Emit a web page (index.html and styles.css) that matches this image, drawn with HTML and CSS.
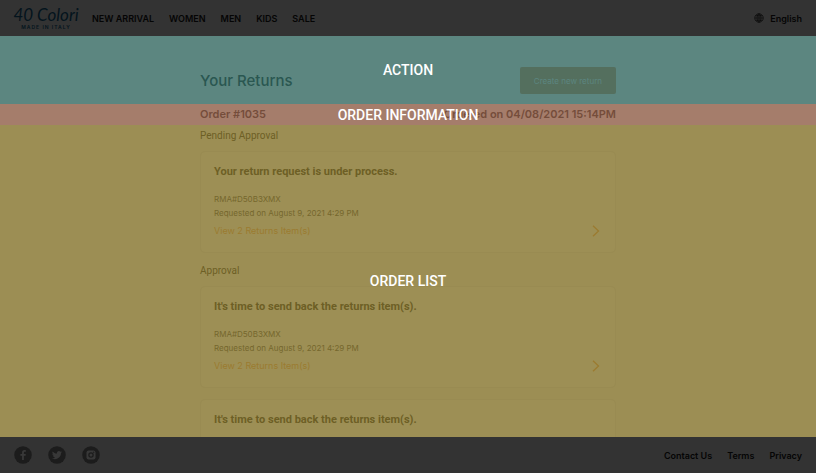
FILE: index.html
```html
<!DOCTYPE html>
<html lang="en">
<head>
  <meta charset="UTF-8">
  <meta name="viewport" content="width=device-width, initial-scale=1.0">
  <title>Your Returns</title>
  <link rel="stylesheet" href="styles.css">
</head>
<body>

  <header class="header">
    <a class="logo" href="#">
      <span class="logo-name">40 Colori</span>
      <span class="logo-tag">MADE IN ITALY</span>
    </a>
    <nav class="menu">
      <a href="#">NEW ARRIVAL</a>
      <a href="#">WOMEN</a>
      <a href="#">MEN</a>
      <a href="#">KIDS</a>
      <a href="#">SALE</a>
    </nav>
    <a class="language" href="#">
      <svg width="10" height="10" viewBox="0 0 20 20" fill="none" stroke="currentColor" stroke-width="1.2">
        <circle cx="10" cy="10" r="8.5"/>
        <ellipse cx="10" cy="10" rx="4" ry="8.5"/>
        <path d="M10 1.5v17M1.5 10h17M3 5.5h14M3 14.5h14"/>
      </svg>
      English
    </a>
  </header>

  <main class="main">
    <section class="section action">
      <div class="container row">
        <h1>Your Returns</h1>
        <button type="button" class="create">Create new return</button>
      </div>
      <span class="section-label">ACTION</span>
    </section>

    <section class="section info">
      <div class="container row">
        <h2>Order #1035</h2>
        <h2>Ordered on 04/08/2021 15:14PM</h2>
      </div>
      <span class="section-label">ORDER INFORMATION</span>
    </section>

    <section class="section list">
      <div class="container">
        <p class="status">Pending Approval</p>
        <article class="card">
          <h3>Your return request is under process.</h3>
          <p>RMA#D50B3XMX</p>
          <p>Requested on August 9, 2021 4:29 PM</p>
          <a class="view" href="#">
            View 2 Returns Item(s)
            <svg width="8" height="12" viewBox="0 0 8 12" fill="none" stroke="currentColor" stroke-width="1.3"><path d="M1 .8L6.500 6 1 11.200"/></svg>
          </a>
        </article>

        <p class="status">Approval</p>
        <article class="card">
          <h3>It's time to send back the returns item(s).</h3>
          <p>RMA#D50B3XMX</p>
          <p>Requested on August 9, 2021 4:29 PM</p>
          <a class="view" href="#">
            View 2 Returns Item(s)
            <svg width="8" height="12" viewBox="0 0 8 12" fill="none" stroke="currentColor" stroke-width="1.3"><path d="M1 .8L6.500 6 1 11.200"/></svg>
          </a>
        </article>
        <article class="card">
          <h3>It's time to send back the returns item(s).</h3>
        </article>
      </div>
      <span class="section-label">ORDER LIST</span>
    </section>
  </main>

  <footer class="footer">
    <div class="social">
      <a href="#" aria-label="Facebook">
        <svg width="18" height="18" viewBox="0 0 36 36">
          <circle class="disc" cx="18" cy="18" r="17.5"/>
          <path class="mark" d="M19.8 28V19.4h3.3l.5-3.6h-3.8v-2.2c0-1.2.5-1.9 1.9-1.9h2V8.4c-.5-.1-1.6-.2-2.8-.2-3.1 0-4.8 1.8-4.8 4.9v2.7h-3.3v3.6h3.3V28z"/>
        </svg>
      </a>
      <a href="#" aria-label="Twitter">
        <svg width="18" height="18" viewBox="0 0 36 36">
          <circle class="disc" cx="18" cy="18" r="17.5"/>
          <path class="mark" d="M28 12.1c-.7.3-1.5.6-2.4.7.9-.5 1.5-1.3 1.8-2.3-.8.5-1.7.8-2.6 1a4.1 4.1 0 0 0-7 3.7c-3.4-.2-6.4-1.8-8.5-4.3-1.1 1.9-.5 4.3 1.3 5.5-.7 0-1.3-.2-1.9-.5 0 2 1.4 3.700 3.300 4.100-.6.2-1.200.2-1.800.1.500 1.600 2 2.800 3.800 2.800A8.300 8.300 0 0 1 8 24.600c6.900 4.400 18-.2 18-10.400.8-.6 1.500-1.300 2-2.100z"/>
        </svg>
      </a>
      <a href="#" aria-label="Instagram">
        <svg width="18" height="18" viewBox="0 0 36 36">
          <circle class="disc" cx="18" cy="18" r="17.5"/>
          <rect class="mark" x="9" y="9" width="18" height="18" rx="4"/>
          <circle class="disc" cx="18" cy="18" r="5.5"/>
          <circle class="mark" cx="18" cy="18" r="3"/>
          <circle class="disc" cx="23.5" cy="12.5" r="1.3"/>
        </svg>
      </a>
    </div>
    <nav class="links">
      <a href="#">Contact Us</a>
      <a href="#">Terms</a>
      <a href="#">Privacy</a>
    </nav>
  </footer>

</body>
</html>
```

FILE: styles.css
```css
* {
  box-sizing: border-box;
}
body {
  margin: 0;
  height: 100vh;
  display: flex;
  flex-direction: column;
  font-family: Inter, "Liberation Sans", sans-serif;
  background-color: #333;
}
h1, h2, h3, p {
  margin: 0;
}
a {
  color: inherit;
  text-decoration: none;
}
svg {
  display: block;
}

/* header */
.header {
  display: flex;
  align-items: center;
  height: 36px;
  padding: 0 14px;
  font-size: 9px;
  font-weight: 600;
  color: #050505;
}
.logo {
  display: flex;
  flex-direction: column;
  align-items: center;
  width: 64px;
  color: #04141d;
}
.logo-name {
  font-family: Lato, sans-serif;
  font-size: 17px;
  font-style: italic;
  font-weight: 400;
  line-height: 18px;
  white-space: nowrap;
}
.logo-tag {
  font-size: 5px;
  line-height: 6px;
  letter-spacing: 1px;
  white-space: nowrap;
}
.menu {
  display: flex;
  gap: 15px;
  margin-left: 14px;
}
.language {
  display: flex;
  align-items: center;
  gap: 6px;
  margin-left: auto;
}

/* sections */
.main {
  flex: 1;
  min-height: 0;
  display: flex;
  flex-direction: column;
}
.section {
  position: relative;
}
.section-label {
  position: absolute;
  top: 50%;
  left: 50%;
  transform: translate(-50%, -50%);
  font-family: Roboto, sans-serif;
  font-size: 14px;
  font-weight: 500;
  line-height: 20px;
  white-space: nowrap;
  color: #fff;
}
.container {
  width: 100%;
  max-width: 416px;
  margin: 0 auto;
}
.row {
  display: flex;
  justify-content: space-between;
  align-items: center;
}
.action {
  padding: 31px 0 10px;
  background-color: #5c8680;
}
h1 {
  font-size: 15px;
  font-weight: 500;
  color: #2a5751;
}
.create {
  height: 27px;
  padding: 0 14px;
  border: none;
  border-radius: 2px;
  font-family: inherit;
  font-size: 8px;
  background-color: #546f5e;
  color: #5c8680;
}
.info {
  background-color: #a57d6b;
}
h2 {
  font-size: 11px;
  font-weight: 600;
  line-height: 21px;
  color: #754d3b;
}
.list {
  flex: 1;
  min-height: 0;
  padding-top: 4px;
  overflow: hidden;
  background-color: #9c8e54;
}
.status {
  padding-bottom: 9px;
  font-family: Roboto, sans-serif;
  font-size: 10px;
  line-height: 13px;
  color: #6d5f25;
}

/* cards */
.card {
  margin-bottom: 11px;
  padding: 13px;
  border: 1px solid #998b52;
  border-radius: 5px;
  background-color: #9d8f55;
  font-size: 8px;
  line-height: 14px;
  color: #75672d;
}
.card h3 {
  margin-bottom: 13px;
  font-family: Roboto, sans-serif;
  font-size: 11px;
  font-weight: 700;
  line-height: 14px;
  color: #6d5f25;
}
.view {
  display: flex;
  justify-content: space-between;
  align-items: center;
  margin: 4px 0 1px;
  padding-right: 2px;
  font-size: 9px;
  color: #9b7b30;
}

/* footer */
.footer {
  display: flex;
  justify-content: space-between;
  align-items: center;
  height: 36px;
  padding: 0 14px;
  font-size: 9px;
  font-weight: 600;
  color: #050505;
}
.social {
  display: flex;
  gap: 16px;
}
.disc {
  fill: #1c1c1c;
}
.mark {
  fill: #383838;
}
.links {
  display: flex;
  gap: 15px;
}
```
